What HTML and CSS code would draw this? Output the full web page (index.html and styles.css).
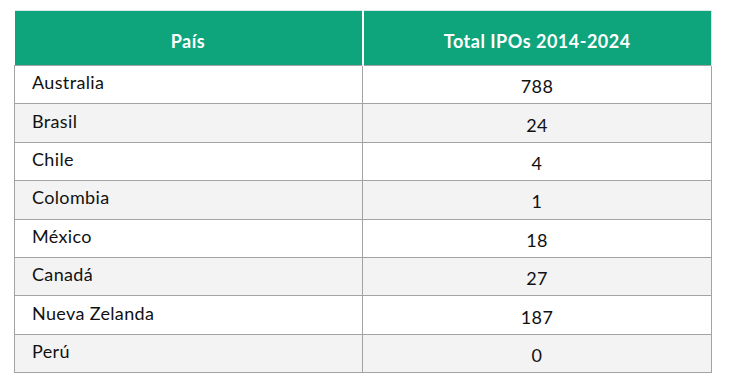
FILE: index.html
```html
<!DOCTYPE html>
<html lang="es">
<head>
<meta charset="utf-8">
<link rel="stylesheet" href="styles.css">
</head>
<body>
<table class="ipo-table">
  <thead>
    <tr>
      <th class="col-country">País</th>
      <th class="col-total">Total IPOs 2014-2024</th>
    </tr>
  </thead>
  <tbody>
    <tr><td class="country">Australia</td><td class="num">788</td></tr>
    <tr><td class="country">Brasil</td><td class="num">24</td></tr>
    <tr><td class="country">Chile</td><td class="num">4</td></tr>
    <tr><td class="country">Colombia</td><td class="num">1</td></tr>
    <tr><td class="country">México</td><td class="num">18</td></tr>
    <tr><td class="country">Canadá</td><td class="num">27</td></tr>
    <tr><td class="country">Nueva Zelanda</td><td class="num">187</td></tr>
    <tr><td class="country">Perú</td><td class="num">0</td></tr>
  </tbody>
</table>
</body>
</html>
```
FILE: styles.css
```css
html, body {
  margin: 0;
  padding: 0;
  background: #ffffff;
}
body {
  padding: 10px 0 0 14px;
  font-family: "Lato", "Liberation Sans", sans-serif;
  color: #111111;
}
.ipo-table {
  border-collapse: collapse;
  width: 698px;
  table-layout: fixed;
}
.ipo-table th {
  background: #0ea47c;
  color: #ffffff;
  font-weight: 700;
  font-size: 18px;
  letter-spacing: 0.5px;
  height: 55px;
  padding: 6px 0 0 0;
  box-sizing: border-box;
  text-align: center;
  border-top: 1px solid #d6e9e2;
}
.ipo-table th.col-country {
  width: 348px;
  border-right: 2px solid #ffffff;
}
.ipo-table th.col-total {
  border-right: 1px solid #d9e8e3;
}
.ipo-table td {
  height: 38.4px;
  box-sizing: border-box;
  border: 1px solid #a3a3a3;
  font-size: 18px;
  letter-spacing: 0.35px;
  padding: 0;
}
.ipo-table td.country {
  padding: 0 0 5px 17px;
  vertical-align: middle;
}
.ipo-table td.num {
  text-align: center;
  padding-top: 3px;
  vertical-align: middle;
}
.ipo-table tbody tr:nth-child(even) td {
  background: #f3f3f3;
}
```
